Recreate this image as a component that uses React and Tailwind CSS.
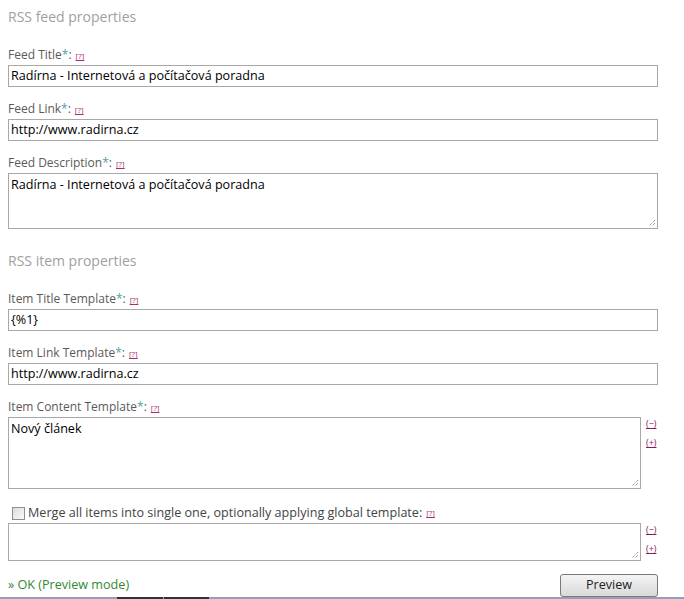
import React from "react";

const font = { fontFamily: '"Open Sans", "Noto Sans", sans-serif' };

const Help = () => (
  <a href="#" className="ml-1 align-middle text-[8px] leading-none text-[#a3306e] underline">[?]</a>
);

const Label = ({ children, star = true }) => (
  <div className="h-[18px] text-[12px] leading-[18px] text-[#5a5a5a]">
    {children}
    {star && <span className="text-[#4fa3a0]">*</span>}:
    <Help />
  </div>
);

const Field = ({ value }) => (
  <div className="mt-px h-[22px] w-[650px] border border-[#a8a8a8] bg-white px-[2px] text-[12.6px] leading-[20px] text-black">
    {value}
  </div>
);

const Area = ({ value, h, w = "w-[650px]" }) => (
  <div className={`relative ${h} ${w} border border-[#a8a8a8] bg-white px-[2px] pt-[2px] text-[12.6px] leading-[18px] text-black`}>
    {value}
    <svg className="absolute bottom-[1px] right-[1px]" width="9" height="9" viewBox="0 0 9 9">
      <path d="M8 2 L2 8 M8 5 L5 8" stroke="#777" strokeWidth="1" strokeDasharray="1 1" />
    </svg>
  </div>
);

const Toggles = () => (
  <div className="ml-[5px] flex flex-col gap-[7px] pt-px text-[9px] leading-[12px] text-[#8b1a5c]">
    <a href="#" className="underline">(−)</a>
    <a href="#" className="underline">(+)</a>
  </div>
);

export default function App() {
  return (
    <div className="relative h-[599px] w-[684px] overflow-hidden bg-white" style={font}>
      <div className="flex flex-col px-2">
        <h2 className="mt-[6px] h-[22px] text-[14px] leading-[22px] text-[#a0a0a0]">RSS feed properties</h2>
        <div className="mt-[18px]">
          <Label>Feed Title</Label>
          <Field value="Radírna - Internetová a počítačová poradna" />
        </div>
        <div className="mt-[13px]">
          <Label>Feed Link</Label>
          <Field value="http://www.radirna.cz" />
        </div>
        <div className="mt-[13px]">
          <Label>Feed Description</Label>
          <div className="mt-px">
            <Area value="Radírna - Internetová a počítačová poradna" h="h-[56px]" />
          </div>
        </div>

        <h2 className="mt-[21px] h-[22px] text-[14px] leading-[22px] text-[#a0a0a0]">RSS item properties</h2>
        <div className="mt-[18px]">
          <Label>Item Title Template</Label>
          <Field value="{%1}" />
        </div>
        <div className="mt-[13px]">
          <Label>Item Link Template</Label>
          <Field value="http://www.radirna.cz" />
        </div>
        <div className="mt-[13px]">
          <Label>Item Content Template</Label>
          <div className="mt-px flex items-start">
            <Area value="Nový článek" h="h-[72px]" w="w-[633px]" />
            <Toggles />
          </div>
        </div>

        <div className="mt-[15px] mb-px flex h-[18px] items-center pl-[4px] text-[12.6px] text-[#444]">
          <span className="mr-[3px] inline-block h-[13px] w-[13px] border border-[#8f8f8f] bg-gradient-to-br from-[#dcdcdc] to-[#fbfbfb]" />
          Merge all items into single one, optionally applying global template:
          <Help />
        </div>
        <div className="flex items-start">
          <Area value="" h="h-[38px]" w="w-[633px]" />
          <Toggles />
        </div>

        <div className="mt-[13px] flex w-[650px] items-center justify-between">
          <span className="text-[12.6px] text-[#2f8a2f]">» OK (Preview mode)</span>
          <button className="h-[23px] w-[98px] rounded-[3px] border border-[#7a7a7a] bg-gradient-to-b from-[#f4f4f4] to-[#d9d9d9] text-[12.6px] text-[#222]">
            Preview
          </button>
        </div>
      </div>
      <div className="absolute bottom-0 left-0 flex h-[2px] w-full bg-[#8fa3b8]">
        <span className="ml-[117px] h-[2px] w-[46px] bg-[#333]" />
        <span className="ml-[1px] h-[2px] w-[45px] bg-[#333]" />
      </div>
    </div>
  );
}
